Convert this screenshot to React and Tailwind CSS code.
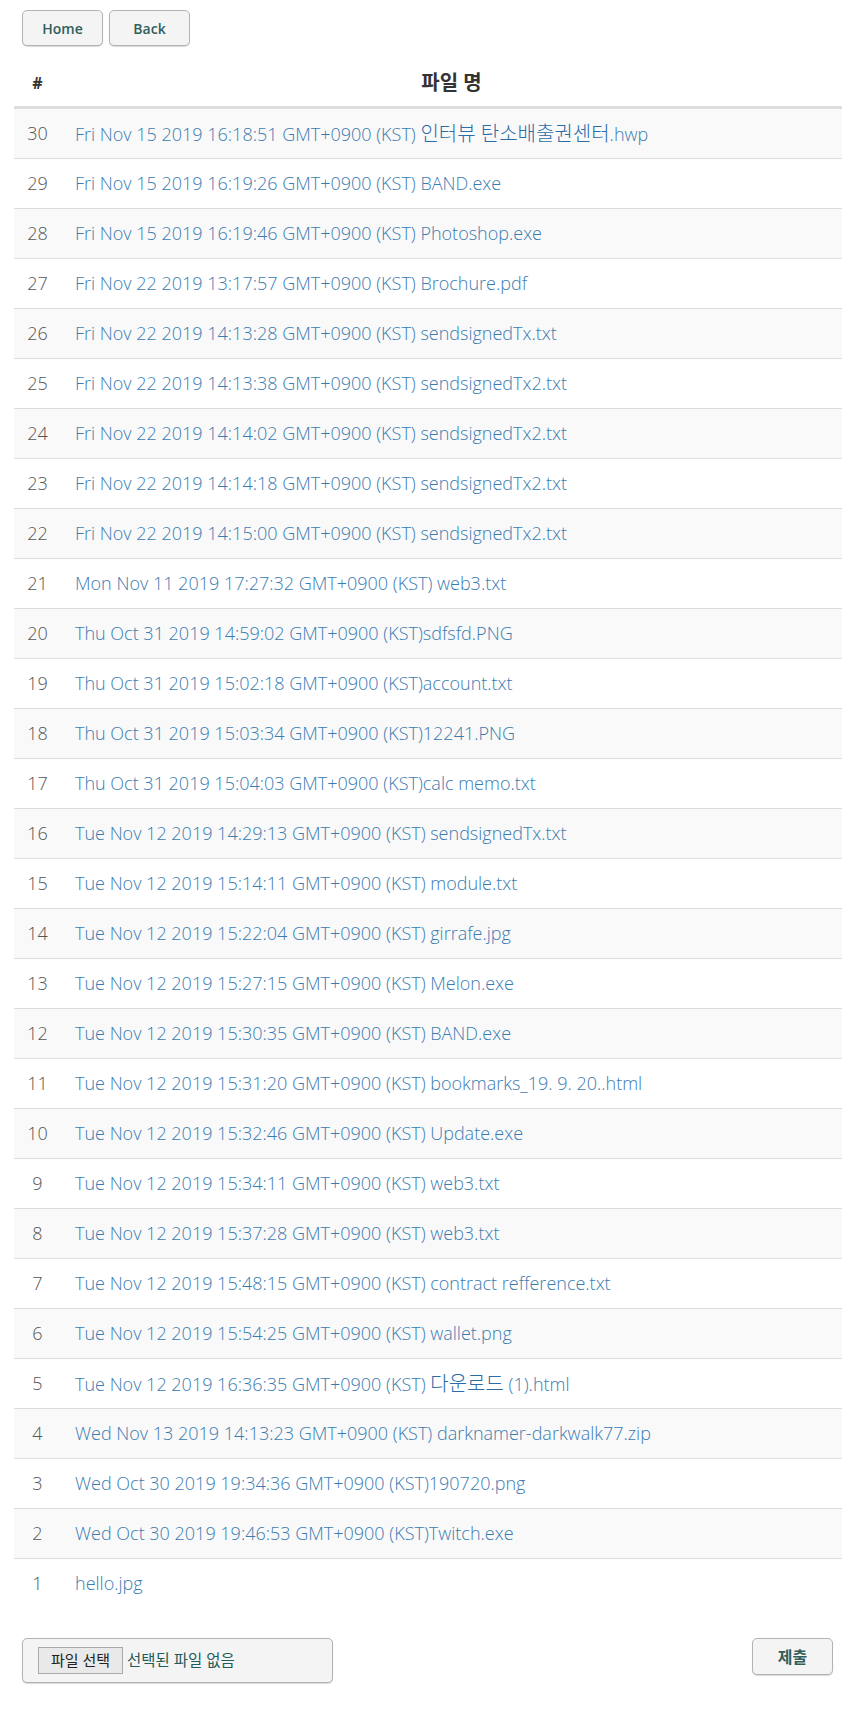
import React from "react";

const rows = [
  [30, "Fri Nov 15 2019 16:18:51 GMT+0900 (KST) 인터뷰 탄소배출권센터.hwp"],
  [29, "Fri Nov 15 2019 16:19:26 GMT+0900 (KST) BAND.exe"],
  [28, "Fri Nov 15 2019 16:19:46 GMT+0900 (KST) Photoshop.exe"],
  [27, "Fri Nov 22 2019 13:17:57 GMT+0900 (KST) Brochure.pdf"],
  [26, "Fri Nov 22 2019 14:13:28 GMT+0900 (KST) sendsignedTx.txt"],
  [25, "Fri Nov 22 2019 14:13:38 GMT+0900 (KST) sendsignedTx2.txt"],
  [24, "Fri Nov 22 2019 14:14:02 GMT+0900 (KST) sendsignedTx2.txt"],
  [23, "Fri Nov 22 2019 14:14:18 GMT+0900 (KST) sendsignedTx2.txt"],
  [22, "Fri Nov 22 2019 14:15:00 GMT+0900 (KST) sendsignedTx2.txt"],
  [21, "Mon Nov 11 2019 17:27:32 GMT+0900 (KST) web3.txt"],
  [20, "Thu Oct 31 2019 14:59:02 GMT+0900 (KST)sdfsfd.PNG"],
  [19, "Thu Oct 31 2019 15:02:18 GMT+0900 (KST)account.txt"],
  [18, "Thu Oct 31 2019 15:03:34 GMT+0900 (KST)12241.PNG"],
  [17, "Thu Oct 31 2019 15:04:03 GMT+0900 (KST)calc memo.txt"],
  [16, "Tue Nov 12 2019 14:29:13 GMT+0900 (KST) sendsignedTx.txt"],
  [15, "Tue Nov 12 2019 15:14:11 GMT+0900 (KST) module.txt"],
  [14, "Tue Nov 12 2019 15:22:04 GMT+0900 (KST) girrafe.jpg"],
  [13, "Tue Nov 12 2019 15:27:15 GMT+0900 (KST) Melon.exe"],
  [12, "Tue Nov 12 2019 15:30:35 GMT+0900 (KST) BAND.exe"],
  [11, "Tue Nov 12 2019 15:31:20 GMT+0900 (KST) bookmarks_19. 9. 20..html"],
  [10, "Tue Nov 12 2019 15:32:46 GMT+0900 (KST) Update.exe"],
  [9, "Tue Nov 12 2019 15:34:11 GMT+0900 (KST) web3.txt"],
  [8, "Tue Nov 12 2019 15:37:28 GMT+0900 (KST) web3.txt"],
  [7, "Tue Nov 12 2019 15:48:15 GMT+0900 (KST) contract refference.txt"],
  [6, "Tue Nov 12 2019 15:54:25 GMT+0900 (KST) wallet.png"],
  [5, "Tue Nov 12 2019 16:36:35 GMT+0900 (KST) 다운로드 (1).html"],
  [4, "Wed Nov 13 2019 14:13:23 GMT+0900 (KST) darknamer-darkwalk77.zip"],
  [3, "Wed Oct 30 2019 19:34:36 GMT+0900 (KST)190720.png"],
  [2, "Wed Oct 30 2019 19:46:53 GMT+0900 (KST)Twitch.exe"],
  [1, "hello.jpg"],
];

const font = { fontFamily: '"Open Sans", "Noto Sans CJK KR", sans-serif' };

function Name({ text }) {
  const parts = text.split(/([\uAC00-\uD7A3]+(?: [\uAC00-\uD7A3]+)*)/);
  return (
    <>
      {parts.map((p, i) =>
        /[\uAC00-\uD7A3]/.test(p) ? (
          <span key={i} className="text-[20px] font-light text-[#2a6ca6]">
            {p}
          </span>
        ) : (
          <span key={i}>{p}</span>
        )
      )}
    </>
  );
}

function Btn({ children, className = "" }) {
  return (
    <button
      className={
        "h-[36px] w-[81px] rounded-[5px] border border-[#b3b3b3] bg-[#f4f4f4] font-semibold text-[#2f5e5b] shadow-[0_1px_1px_rgba(0,0,0,0.15)] " +
        className
      }
    >
      {children}
    </button>
  );
}

export default function App() {
  return (
    <div className="w-[865px] min-h-[1710px] bg-white pt-[10px]" style={font}>
      <div className="flex gap-[6px] pl-[22px]">
        <Btn className="text-[14px]">Home</Btn>
        <Btn className="text-[14px]">Back</Btn>
      </div>
      <div className="ml-[14px] mt-[14px] w-[828px]">
        <div className="flex h-[48px] items-center border-b-2 border-[#dddddd] font-bold text-[#333]">
          <div className="w-[47px] text-center text-[16px]">#</div>
          <div className="flex-1 text-center text-[20px]">파일 명</div>
        </div>
        {rows.map(([n, name], i) => (
          <div
            key={n}
            className={
              "flex h-[50px] items-center border-t border-[#dddddd] text-[18px] font-light " +
              (i % 2 === 0 ? "bg-[#f9f9f9]" : "bg-white")
            }
          >
            <div className="w-[47px] text-center text-[#555]">{n}</div>
            <div className="flex-1 pl-[14px] text-[#3a7cb1]">
              <Name text={name} />
            </div>
          </div>
        ))}
      </div>
      <div className="mt-[30px] flex items-start justify-between pl-[22px] pr-[32px]">
        <div className="flex h-[45px] w-[311px] items-center rounded-[5px] border border-[#b3b3b3] bg-[#f4f4f4] pl-[15px] shadow-[0_1px_1px_rgba(0,0,0,0.15)]">
          <span className="flex h-[27px] w-[85px] items-center justify-center border border-[#a9a9a9] bg-[#e9e9e9] text-[15px] text-[#222]">
            파일 선택
          </span>
          <span className="pl-[4px] text-[15.5px] text-[#1f5c5a]">선택된 파일 없음</span>
        </div>
        <Btn className="h-[37px] w-[80px] text-[16px]">제출</Btn>
      </div>
    </div>
  );
}
